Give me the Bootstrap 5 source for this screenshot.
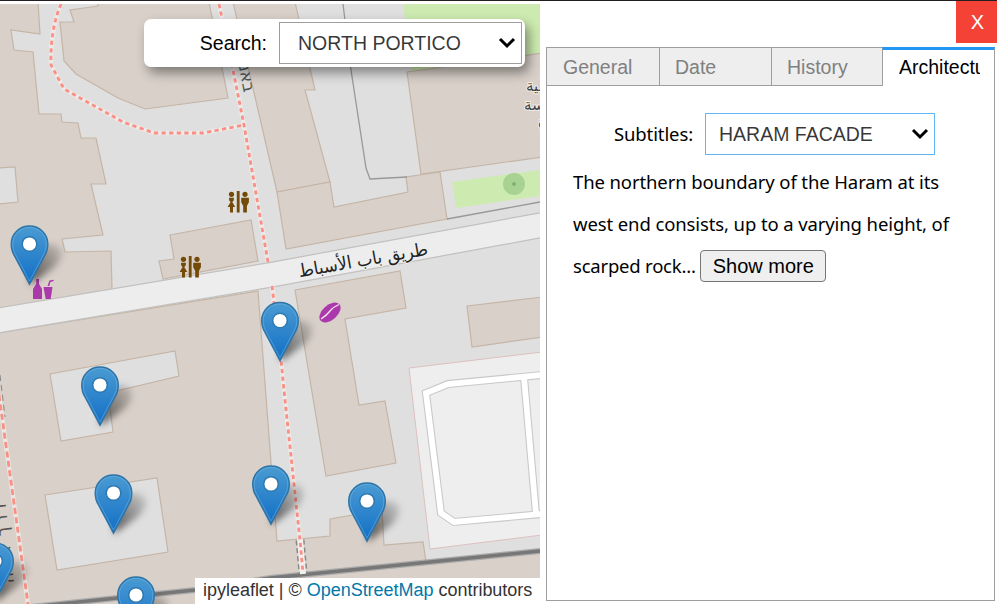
<!DOCTYPE html>
<html lang="en">
<head>
<meta charset="utf-8">
<meta name="viewport" content="width=device-width, initial-scale=1">
<title>North Portico</title>
<link href="https://cdn.jsdelivr.net/npm/bootstrap@5.3.0/dist/css/bootstrap.min.css" rel="stylesheet">
<style>
  body { height: 607px; font-family: "Liberation Sans", Arial, sans-serif; font-size: 19.5px; color: #000; border-top: 1px solid #231f20; line-height: 1.3; }
  .map-pane { width: 540px; height: 600px; margin-top: 3px; }
  .map-pane svg.canvas { width: 540px; height: 600px; }
  .search-box { top: 15px; right: 15px; width: 381px; height: 48px; border-radius: 7px; padding: 3px; box-shadow: 4px 6px 12px rgba(0,0,0,.42); }
  .search-box label { width: 132px; padding-right: 12px; padding-top: 1px; }
  .picker { height: 42px; font-size: 19.5px; color: rgba(0,0,0,.8); border: 1px solid #9e9e9e; border-radius: 0; line-height: 1.3; padding: 1px 36px 0 18px; background-position: right 5px center; background-size: 18px 12px;
    background-image: url("data:image/svg+xml,%3Csvg xmlns='http://www.w3.org/2000/svg' viewBox='0 0 18 12'%3E%3Cpath d='M2 2l7 7 7-7' fill='none' stroke='%23000' stroke-width='3'/%3E%3C/svg%3E"); }
  .search-box .picker { width: 243px; }
  .credits { height: 26px; width: 345px; font-size: 18px; line-height: 24px; padding-left: 8px; color: #333; letter-spacing: -.02px; }
  .credits a { color: #0078a8; }
  .side { width: 457px; height: 606px; padding-left: 6px; }
  .btn-close-x { width: 41px; height: 42px; background: #f44336; color: #fff; border-radius: 0; font-size: 20px; padding: 0 0 0 2px; border: 0; }
  .tab-row { margin-top: 4px; height: 39px; width: 449px; }
  .tab-row .nav-link { width: 112px; height: 39px; padding: 2px 0 0 15px; border: 1px solid #9e9e9e; border-right: 0; border-radius: 0; background: #eee; color: #808080; font-size: 19.5px; text-align: left; }
  .tab-row .first-tab { width: 113px; padding-left: 16px; }
  .tab-row .nav-link.active { width: 113px; background: #fff; color: #000; border: 1px solid #9e9e9e; border-top: 3px solid #2196f3; border-bottom: 0; padding: 0 14px 1px 16px; }
  .tab-row .nav-link.active span { display: block; overflow: hidden; white-space: nowrap; }
  .tab-row .third-tab { width: 111px; }
  .panel-body { width: 449px; height: 515px; border: 1px solid #9e9e9e; border-top: 0; padding: 27px 0 0 26px; font-family: "Noto Sans", sans-serif; font-size: 18.5px; letter-spacing: -.11px; }
  .panel-body label { width: 132px; padding-right: 12px; }
  .panel-body .picker { width: 230px; border-color: #64b5f6; padding-left: 13px; font-family: "Liberation Sans", Arial, sans-serif; letter-spacing: 0; }
  .prose { margin-top: 6px; line-height: 42px; white-space: nowrap; }
  .prose .tail { letter-spacing: -.21px; }
  .more { font-family: "Liberation Sans", Arial, sans-serif; font-size: 20px; letter-spacing: 0; width: 126px; height: 32px; padding: 0; line-height: 30px; border: 1px solid #767676; border-radius: 4px; background: #efefef; color: #000; }
</style>
</head>
<body class="bg-white overflow-hidden">
<div class="d-flex">
  <main class="map-pane position-relative flex-shrink-0 overflow-hidden">
    <svg class="canvas d-block" viewBox="0 4 540 600">
      <defs>
        <linearGradient id="blue" x1="0" y1="0" x2="0" y2="1"><stop offset="0" stop-color="#4a9bd2"/><stop offset="1" stop-color="#126fc6"/></linearGradient>
        <filter id="soft" x="-40%" y="-40%" width="180%" height="180%"><feGaussianBlur stdDeviation="3.5"/></filter>
        <linearGradient id="shade" x1="0" y1="1" x2="1" y2="0"><stop offset="0" stop-color="#000" stop-opacity=".65"/><stop offset="1" stop-color="#000" stop-opacity=".08"/></linearGradient>
        <g id="pin">
          <path d="M0 0L3-30Q13-45 29-39Q38-31 24-17Z" fill="url(#shade)" filter="url(#soft)"/>
          <path d="M0-.8L-15-29C-17.5-33-18.3-37-18.3-41A18.3 18 0 0 1 18.3-41C18.3-37 17.5-33 15-29Z" fill="url(#blue)" stroke="#2e74a6" stroke-width="1.4"/>
          <path d="M0-4L-13.8-30C-16-34-16.8-37-16.8-41A16.8 16.6 0 0 1 16.8-41C16.8-37 16-34 13.8-30Z" fill="none" stroke="#77b6e3" stroke-opacity=".5"/>
          <circle cy="-41" r="7.3" fill="#fff" stroke="#2e79b0" stroke-width="1.5"/>
        </g>
        <g id="wc" fill="#734a08">
          <rect x="-1.2" y="-11" width="2.800" height="21.500"/>
          <circle cx="-6.500" cy="-7.700" r="2.600"/><circle cx="7" cy="-7.700" r="2.600"/>
          <path d="M-9-4.200h5l-.3 2.800-1.400 1.400L-2.800 5H-5v5.500h-3V5h-2.400L-7.400 0-8.800-1.400z"/>
          <path d="M3.200-4.200h7.700V.3L8.900 4V10.500H5.200V4L3.200.3z"/>
        </g>
      </defs>
      <rect y="4" width="540" height="600" fill="#dfdfdf"/>
      <path d="M403 4H540V54L407 72H412Z" fill="#cdebb0"/>
      <path d="M452 182L540 170V196L456 208Z" fill="#cdebb0"/>
      <circle cx="514" cy="184" r="11" fill="#a8d291"/><circle cx="514" cy="184" r="2" fill="#7bb770"/>
      <g fill="#d9d0c9" stroke="#c5b5a7" stroke-width="1.2">
        <path fill-rule="evenodd" d="M-2 2H38L40 34 11 30 14 50 33 52 39 114 61 114 62 122 78 123 81 138 96 138 106 184 91 184 103 235 62 239 65 252 111 251 112 289-2 309ZM-2 168L15 167 18 202-2 204Z"/>
        <path d="M98 2V6L70 10 74 22 60 22 64 61 76 74 118 98 145 109 228 98 209 2Z"/>
        <path d="M233 2H295L315 90 305 90 330 182 277 192Z"/>
        <path d="M277 192L330 182 334 207 408 192 406 177 440 172 447 219 286 249Z"/>
        <path d="M407 72L542 53V157L421 174Z"/>
        <path d="M170 235L251 220 258 261 163 279 159 261 174 259Z"/>
        <path fill-rule="evenodd" d="M-2 333L258 291 267 410 277 541 330 536 330 519 382 510 384 545 423 542 426 561 542 551V606H-2ZM50 374L175 351 179 376 108 393 113 432 61 441ZM45 495L157 478 168 552 57 570Z"/>
        <path d="M295 290L400 271 406 308 345 319 359 405 385 401 396 463 326 476Z"/>
        <path d="M467 306L542 297V337L472 347Z"/>
      </g>
      <path d="M409 368L542 352V535L430 549Z" fill="#eee" stroke="#dcc0bf"/>
      <g fill="none" stroke-linejoin="miter">
        <path d="M542 375L448 384 426 393 441 513 454 522 542 514M524 377L536 514" stroke="#c9c9c9" stroke-width="8"/>
        <path d="M542 375L448 384 426 393 441 513 454 522 542 514M524 377L536 514" stroke="#fff" stroke-width="5.800"/>
      </g>
      <path d="M343 4L351 70 366 168 370 179 407 177M447 219L540 202" fill="none" stroke="#999" stroke-width="1.3"/>
      <path d="M-2 320.5L270 275 542 225" fill="none" stroke="#c3c1bf" stroke-width="26"/>
      <path d="M-2 320.5L270 275 542 225" fill="none" stroke="#ededed" stroke-width="23.5"/>
      <path d="M30 607L195 590 270 578 540 551" fill="none" stroke="#aaa" stroke-width="6"/>
      <path d="M30 607L195 590 270 578 540 551" fill="none" stroke="#777" stroke-width="3.5"/>
      <path d="M300 540L303 573" stroke="#888" stroke-width="9" stroke-dasharray="5 3"/>
      <path d="M300 539L303 574" stroke="#f2efed" stroke-width="6"/>
      <g fill="none" stroke="#efebea" stroke-width="4.5" stroke-opacity=".8">
        <path d="M61 4Q50 30 51 65L64 89 123 122 154 133H203L244 125"/><path d="M219 4L233 70 244 125 258 205 268 262M272 286L281 360 285 400 300 540M-1 395L28 604"/>
      </g>
      <g fill="none" stroke="#fa8f84" stroke-width="2.8" stroke-dasharray="4.2 3.4">
        <path d="M61 4Q50 30 51 65L64 89 123 122 154 133H203L244 125"/><path d="M219 4L233 70 244 125 258 205 268 262M272 286L281 360 285 400 300 540 303 573"/><path d="M-1 395L28 604" stroke-dasharray="6 3.5"/>
      </g>
      <g font-family="'DejaVu Sans', 'Noto Sans', sans-serif" fill="#222">
        <text transform="translate(364 266) rotate(-10)" text-anchor="middle" font-size="18" textLength="131" lengthAdjust="spacingAndGlyphs" stroke="#ededed" stroke-width="2" paint-order="stroke">طريق باب الأسباط</text>
        <text transform="translate(244 93) rotate(79)" text-anchor="end" font-size="17" fill="#555">באנו</text>
        <text transform="translate(14 583) rotate(-96)" font-size="17" textLength="81" fill="#555">דרך גונה</text>
        <g font-size="15" fill="#444" stroke="#eee" stroke-width="2" paint-order="stroke"><text x="526" y="91">ـية</text><text x="524" y="110">ـسة</text><text x="538" y="128">ة</text></g>
      </g>
      <path d="M0 375L3 400 5 417" stroke="#888" stroke-dasharray="6 4" fill="none"/>
      <use href="#wc" x="238" y="202"/><use href="#wc" x="190" y="267"/>
      <g fill="#ac39ac">
        <path d="M36.200 279h2.800v5l3 5v10h-9v-10l3.200-5zM43.500 287h9L50.700 299h-5zM47.600 286L49.400 280.500 53.500 279.700 53.800 281 50.400 282 49.300 286z"/>
        <ellipse cx="330" cy="312.500" rx="12.500" ry="7.500" transform="rotate(-42 330 312.500)"/>
      </g>
      <path d="M321 319Q327 315 330 311T339 304.500" fill="none" stroke="#f2e4f0" stroke-width="1.3"/>
      <use href="#pin" x="29.500" y="285"/><use href="#pin" x="280" y="361.500"/><use href="#pin" x="100" y="426"/>
      <use href="#pin" x="113.500" y="534"/><use href="#pin" x="271" y="525"/><use href="#pin" x="367" y="542"/>
      <use href="#pin" x="-5" y="602"/><use href="#pin" x="136" y="636"/>
    </svg>
    <div class="search-box position-absolute bg-white d-flex align-items-center">
      <label for="place" class="text-end">Search:</label>
      <select id="place" class="form-select picker"><option>NORTH PORTICO</option></select>
    </div>
    <div class="credits position-absolute bottom-0 end-0 bg-white text-nowrap">ipyleaflet | © <a href="#" class="text-decoration-none">OpenStreetMap</a> contributors</div>
  </main>
  <aside class="side flex-shrink-0">
    <div class="d-flex justify-content-end"><button class="btn btn-close-x">X</button></div>
    <div class="nav tab-row flex-nowrap">
      <button class="nav-link first-tab">General</button>
      <button class="nav-link">Date</button>
      <button class="nav-link third-tab">History</button>
      <button class="nav-link active"><span>Architecture</span></button>
    </div>
    <section class="panel-body">
      <div class="d-flex align-items-center">
        <label for="subtitle" class="text-end">Subtitles:</label>
        <select id="subtitle" class="form-select picker"><option>HARAM FACADE</option></select>
      </div>
      <div class="prose">The northern boundary of the Haram at its<br>west end consists, up to a varying height, of<br><span class="tail">scarped rock... </span><button class="btn more align-baseline">Show more</button></div>
    </section>
  </aside>
</div>
<script src="https://cdn.jsdelivr.net/npm/bootstrap@5.3.0/dist/js/bootstrap.bundle.min.js"></script>
</body>
</html>
